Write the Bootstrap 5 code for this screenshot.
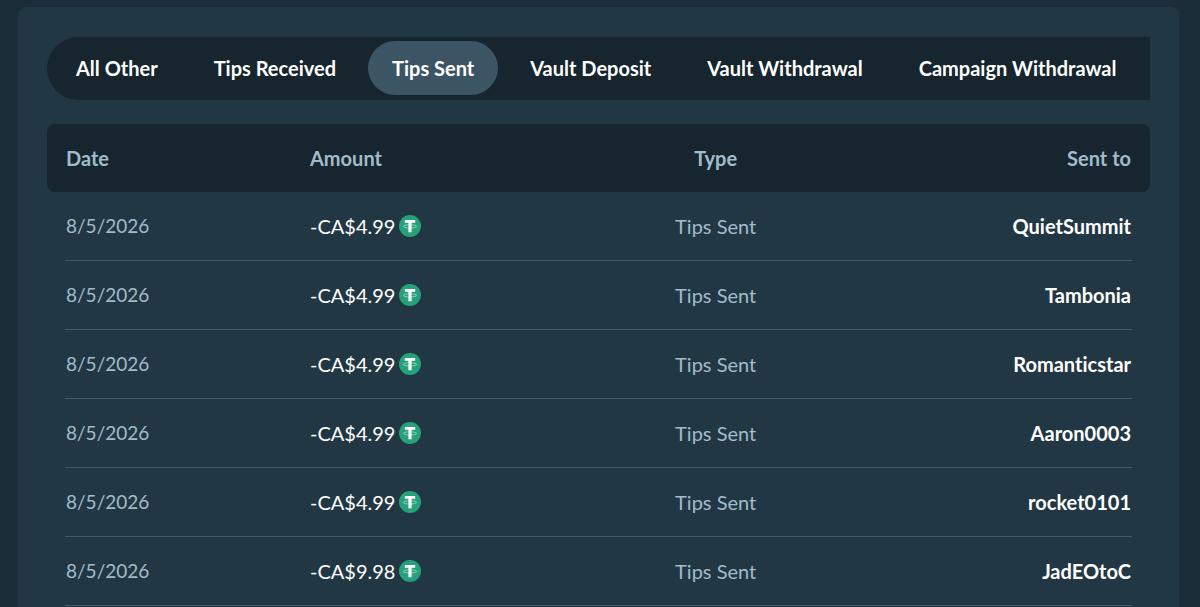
<!DOCTYPE html>
<html lang="en">
<head>
<meta charset="utf-8">
<meta name="viewport" content="width=device-width, initial-scale=1">
<title>Transactions</title>
<link href="https://cdn.jsdelivr.net/npm/bootstrap@5.3.0/dist/css/bootstrap.min.css" rel="stylesheet">
<style>
  body { background: #1b2d38; color: #fff; font-family: Lato, "Liberation Sans", sans-serif; font-size: 20px; line-height: 28px; font-variant-ligatures: none; overflow-x: hidden; scrollbar-width: none; }
  .panel { background: #223744; border-radius: 8px; margin: 7px 21px 0 18px; padding: 30px 29px; }
  .tab-strip { background: #16252e; border-radius: 32px 0 0 32px; padding: 4px 5px 5px; gap: 8px; }
  .tab-strip .btn { --bs-btn-color: #fff; --bs-btn-hover-color: #fff; --bs-btn-active-color: #fff; --bs-btn-active-bg: #3b5565; --bs-btn-hover-bg: #2f4553; --bs-btn-border-width: 0; font-size: 20px; line-height: 30px; padding: 12px 24px; }
  .history { --bs-table-bg: transparent; --bs-table-color: #a1bccb; color: #a1bccb; table-layout: fixed; }
  .history > :not(caption) > * > * { border: 0; padding: 20px 19px; }
  .history > thead th { background: #16252e; font-weight: 700; }
  .history > thead th:first-child { border-radius: 8px 0 0 8px; }
  .history > thead th:last-child { border-radius: 0 8px 8px 0; }
  .history > tbody tr { background: linear-gradient(#40586a, #40586a) center bottom / calc(100% - 36px) 1px no-repeat; height: 69px; }
  .history > tbody > tr > td { padding: 20px 19px 21px; }
  .history > tbody td:first-child { font-size: 19px; }
  .history > tbody a, .history .sum { color: #fff; }
  .history > tbody a { font-weight: 700; }
  .col-date { width: 244px; }
  .col-amount { width: 26%; }
  .col-kind { width: 25%; }
</style>
</head>
<body>
<svg class="d-none" aria-hidden="true">
  <symbol id="tether" viewBox="0 0 22 22">
    <circle cx="11" cy="11" r="11" fill="#26a17b"/>
    <ellipse cx="11" cy="11.4" rx="6.6" ry="1.6" fill="none" stroke="#b5e2d2" stroke-width=".7"/>
    <path d="M5.8 5h10.4v2.8h-3.6v9.4H9.4V7.8H5.8z" fill="#fff"/>
  </symbol>
</svg>
<main class="panel">
  <nav class="tab-strip d-flex overflow-hidden mb-4" aria-label="Transaction type">
    <button type="button" class="btn rounded-pill text-nowrap fw-bold">All Other</button>
    <button type="button" class="btn rounded-pill text-nowrap fw-bold">Tips Received</button>
    <button type="button" class="btn rounded-pill text-nowrap fw-bold active" aria-current="true">Tips Sent</button>
    <button type="button" class="btn rounded-pill text-nowrap fw-bold">Vault Deposit</button>
    <button type="button" class="btn rounded-pill text-nowrap fw-bold">Vault Withdrawal</button>
    <button type="button" class="btn rounded-pill text-nowrap fw-bold">Campaign Withdrawal</button>
  </nav>
  <table class="table history align-middle mb-0">
    <thead>
      <tr><th class="col-date" scope="col">Date</th><th class="col-amount" scope="col">Amount</th><th class="col-kind text-center" scope="col">Type</th><th class="text-end" scope="col">Sent to</th></tr>
    </thead>
    <tbody>
      <tr><td>8/5/2026</td><td><span class="sum d-flex align-items-center gap-1">-CA$4.99<svg width="22" height="22" role="img" aria-label="USDT"><use href="#tether"/></svg></span></td><td class="text-center">Tips Sent</td><td class="text-end"><a class="text-decoration-none" href="#">QuietSummit</a></td></tr>
      <tr><td>8/5/2026</td><td><span class="sum d-flex align-items-center gap-1">-CA$4.99<svg width="22" height="22" role="img" aria-label="USDT"><use href="#tether"/></svg></span></td><td class="text-center">Tips Sent</td><td class="text-end"><a class="text-decoration-none" href="#">Tambonia</a></td></tr>
      <tr><td>8/5/2026</td><td><span class="sum d-flex align-items-center gap-1">-CA$4.99<svg width="22" height="22" role="img" aria-label="USDT"><use href="#tether"/></svg></span></td><td class="text-center">Tips Sent</td><td class="text-end"><a class="text-decoration-none" href="#">Romanticstar</a></td></tr>
      <tr><td>8/5/2026</td><td><span class="sum d-flex align-items-center gap-1">-CA$4.99<svg width="22" height="22" role="img" aria-label="USDT"><use href="#tether"/></svg></span></td><td class="text-center">Tips Sent</td><td class="text-end"><a class="text-decoration-none" href="#">Aaron0003</a></td></tr>
      <tr><td>8/5/2026</td><td><span class="sum d-flex align-items-center gap-1">-CA$4.99<svg width="22" height="22" role="img" aria-label="USDT"><use href="#tether"/></svg></span></td><td class="text-center">Tips Sent</td><td class="text-end"><a class="text-decoration-none" href="#">rocket0101</a></td></tr>
      <tr><td>8/5/2026</td><td><span class="sum d-flex align-items-center gap-1">-CA$9.98<svg width="22" height="22" role="img" aria-label="USDT"><use href="#tether"/></svg></span></td><td class="text-center">Tips Sent</td><td class="text-end"><a class="text-decoration-none" href="#">JadEOtoC</a></td></tr>
    </tbody>
  </table>
</main>
<script src="https://cdn.jsdelivr.net/npm/bootstrap@5.3.0/dist/js/bootstrap.bundle.min.js"></script>
</body>
</html>
